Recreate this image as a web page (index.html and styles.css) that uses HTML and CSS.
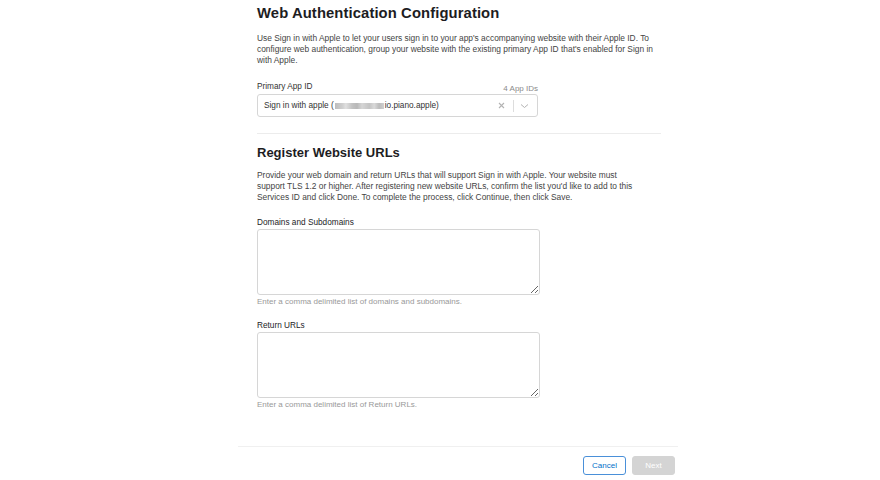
FILE: index.html
```html
<!DOCTYPE html>
<html>
<head>
<meta charset="utf-8">
<link rel="stylesheet" href="styles.css">
</head>
<body>
<div class="page">
  <div class="content">
    <h1 class="title">Web Authentication Configuration</h1>
    <p class="desc desc-1">Use Sign in with Apple to let your users sign in to your app's accompanying website with their Apple ID. To configure web authentication, group your website with the existing primary App ID that's enabled for Sign in with Apple.</p>
    <div class="field">
      <div class="label-row">
        <span class="label">Primary App ID</span>
        <span class="count">4 App IDs</span>
      </div>
      <div class="select">
        <span class="select-text">Sign in with apple (<span class="blur"></span>io.piano.apple)</span>
        <span class="select-icons">
          <svg class="ico-x" width="7" height="7" viewBox="0 0 7 7"><path d="M1 1L6 6M6 1L1 6" stroke="#b3b3b3" stroke-width="1.1"/></svg>
          <span class="sep"></span>
          <svg class="ico-chev" width="9" height="6" viewBox="0 0 9 6"><path d="M1 1.5L4.5 4.5L8 1.5" fill="none" stroke="#b3b3b3" stroke-width="1"/></svg>
        </span>
      </div>
    </div>
    <div class="divider"></div>
    <h2 class="subtitle">Register Website URLs</h2>
    <p class="desc desc-2">Provide your web domain and return URLs that will support Sign in with Apple. Your website must support TLS 1.2 or higher. After registering new website URLs, confirm the list you'd like to add to this Services ID and click Done. To complete the process, click Continue, then click Save.</p>
    <div class="field field-ta">
      <div class="label dark">Domains and Subdomains</div>
      <textarea class="ta"></textarea>
      <div class="hint">Enter a comma delimited list of domains and subdomains.</div>
    </div>
    <div class="field field-ta">
      <div class="label dark">Return URLs</div>
      <textarea class="ta"></textarea>
      <div class="hint">Enter a comma delimited list of Return URLs.</div>
    </div>
  </div>
  <div class="footer">
    <button class="btn btn-cancel">Cancel</button>
    <button class="btn btn-next">Next</button>
  </div>
</div>
</body>
</html>
```
FILE: styles.css
```css
* { box-sizing: border-box; }
html, body { margin: 0; padding: 0; background: #fff; }
body { font-family: "Liberation Sans", Arial, sans-serif; color: #333; }
.page { width: 440px; margin: 0 0 0 238px; }
.content { padding: 0 17px 0 19px; }
.title { margin: 0; padding-top: 4px; font-size: 14.8px; font-weight: bold; color: #1d1d1f; line-height: 18px; letter-spacing: 0.1px; }
.desc { margin: 0; font-size: 8.4px; line-height: 11px; color: #444; }
.desc-1 { margin-top: 11px; }
.desc-2 { margin-top: 9px; max-width: 385px; }
.field { margin-top: 15px; width: 281px; }
.label-row { display: flex; justify-content: space-between; align-items: flex-end; height: 11px; }
.label { font-size: 8.25px; color: #333; line-height: 11px; }
.label.dark { color: #1d1d1f; }
.count { font-size: 8px; color: #8a8a8a; line-height: 11px; position: relative; top: 2px; }
.select { margin-top: 2px; height: 23px; border: 1px solid #d6d6d6; border-radius: 3px; display: flex; align-items: center; justify-content: space-between; padding: 0 8px 0 6px; }
.select-text { font-size: 8.25px; color: #333; display: flex; align-items: center; }
.blur { display: inline-block; width: 49px; height: 6px; background: linear-gradient(90deg, #bdbdbd, #cfcfcf 15%, #e0e0e0 22%, #c2c2c2 35%, #b8b8b8 45%, #d6d6d6 55%, #c4c4c4 70%, #dadada 80%, #bcbcbc 90%, #d0d0d0); margin: 0 1px; filter: blur(0.5px); }
.select-icons { display: flex; align-items: center; }
.ico-x { margin-right: 8px; }
.sep { width: 1px; height: 12px; background: #ddd; margin-right: 6px; }
.divider { height: 1px; background: #ececec; margin: 16px 0 0; width: 404px; }
.subtitle { margin: 11px 0 0; font-size: 13px; font-weight: bold; color: #1d1d1f; line-height: 16px; }
.field-ta { margin-top: 14px; width: 283px; }
.field-ta + .field-ta { margin-top: 13px; }
.ta { display: block; width: 283px; height: 66px; border: 1px solid #d6d6d6; border-radius: 3px; margin: 1px 0 0; resize: vertical; }
.hint { font-size: 8px; color: #999; line-height: 11px; margin-top: 1px; }
.footer { margin-top: 36px; border-top: 1px solid #f0f0f0; padding: 9px 3px 0 0; display: flex; justify-content: flex-end; gap: 6px; }
.btn { font-family: "Liberation Sans", Arial, sans-serif; font-size: 8px; height: 19px; width: 43px; border-radius: 3px; padding: 0; }
.btn-cancel { background: #fff; border: 1px solid #4a90d9; color: #0070c9; }
.btn-next { background: #d4d4d4; border: 1px solid #d4d4d4; color: #fff; }
```
